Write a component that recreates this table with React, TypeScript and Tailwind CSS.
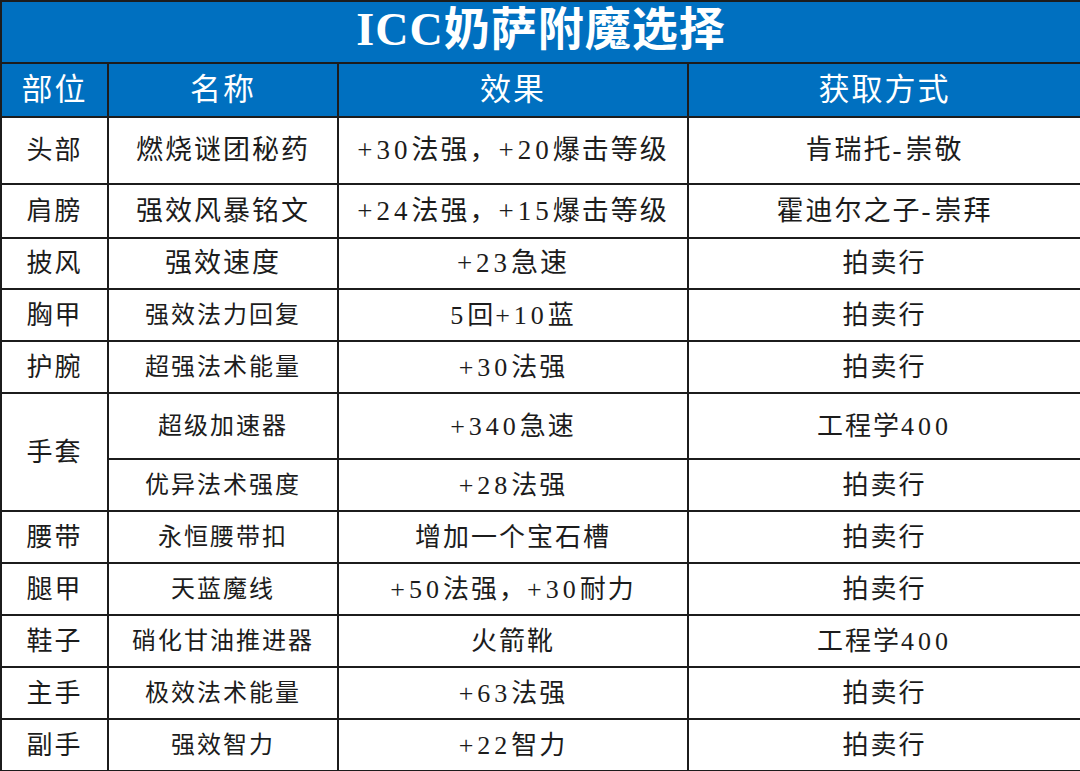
const rows: { part: string; span?: number; name: string; effect: string; source: string; h: string; big?: boolean }[] = [
  { part: "头部", name: "燃烧谜团秘药", effect: "+30法强，+20爆击等级", source: "肯瑞托-崇敬", h: "h-[67px]", big: true },
  { part: "肩膀", name: "强效风暴铭文", effect: "+24法强，+15爆击等级", source: "霍迪尔之子-崇拜", h: "h-[54px]", big: true },
  { part: "披风", name: "强效速度", effect: "+23急速", source: "拍卖行", h: "h-[51px]", big: true },
  { part: "胸甲", name: "强效法力回复", effect: "5回+10蓝", source: "拍卖行", h: "h-[52px]" },
  { part: "护腕", name: "超强法术能量", effect: "+30法强", source: "拍卖行", h: "h-[52px]" },
  { part: "手套", span: 2, name: "超级加速器", effect: "+340急速", source: "工程学400", h: "h-[66px]" },
  { part: "", name: "优异法术强度", effect: "+28法强", source: "拍卖行", h: "h-[52px]" },
  { part: "腰带", name: "永恒腰带扣", effect: "增加一个宝石槽", source: "拍卖行", h: "h-[52px]" },
  { part: "腿甲", name: "天蓝魔线", effect: "+50法强，+30耐力", source: "拍卖行", h: "h-[52px]" },
  { part: "鞋子", name: "硝化甘油推进器", effect: "火箭靴", source: "工程学400", h: "h-[52px]" },
  { part: "主手", name: "极效法术能量", effect: "+63法强", source: "拍卖行", h: "h-[52px]" },
  { part: "副手", name: "强效智力", effect: "+22智力", source: "拍卖行", h: "h-[52px]" },
];

const cell = "border-2 border-[#1c1c1c] text-center align-middle p-0";

// digits and signs sit wider apart than the CJK glyphs around them
const Spaced = ({ text }: { text: string }) => (
  <>
    {text.split(/([+\-0-9]+)/).map((part, i) =>
      /[+\-0-9]/.test(part) ? (
        <span key={i} className="tracking-[4px]">
          {part}
        </span>
      ) : (
        <span key={i}>{part}</span>
      )
    )}
  </>
);

export default function App() {
  return (
    <div className="w-[1080px] h-[771px] bg-white overflow-hidden">
      <table
        className="w-[1080px] table-fixed border-collapse text-[#1c1c1c] text-[26px] tracking-[2px]"
        style={{ fontFamily: '"Liberation Serif", "Noto Sans CJK SC", serif' }}
      >
        <colgroup>
          <col className="w-[107px]" />
          <col className="w-[230px]" />
          <col className="w-[350px]" />
          <col className="w-[393px]" />
        </colgroup>
        <thead>
          <tr className="h-[62px] bg-[#0070c0]">
            <th colSpan={4} className={`${cell} text-white text-[46px] font-bold tracking-[1px] leading-none pb-1`}>
              ICC奶萨附魔选择
            </th>
          </tr>
          <tr className="h-[54px] bg-[#0070c0]">
            <th className={`${cell} text-white text-[31px] font-normal`}>部位</th>
            <th className={`${cell} text-white text-[31px] font-normal`}>名称</th>
            <th className={`${cell} text-white text-[31px] font-normal`}>效果</th>
            <th className={`${cell} text-white text-[31px] font-normal`}>获取方式</th>
          </tr>
        </thead>
        <tbody>
          {rows.map((r, i) => (
            <tr key={i} className={r.h}>
              {r.part !== "" && (
                <td rowSpan={r.span ?? 1} className={cell}>
                  {r.part}
                </td>
              )}
              <td className={`${cell} ${r.big ? "text-[27px]" : "text-[24px]"}`}>{r.name}</td>
              <td className={`${cell} ${r.big ? "text-[27px]" : "text-[26px]"}`}>
                <Spaced text={r.effect} />
              </td>
              <td className={`${cell} ${r.big && i < 2 ? "text-[27px]" : "text-[26px]"}`}>
                <Spaced text={r.source} />
              </td>
            </tr>
          ))}
        </tbody>
      </table>
    </div>
  );
}
